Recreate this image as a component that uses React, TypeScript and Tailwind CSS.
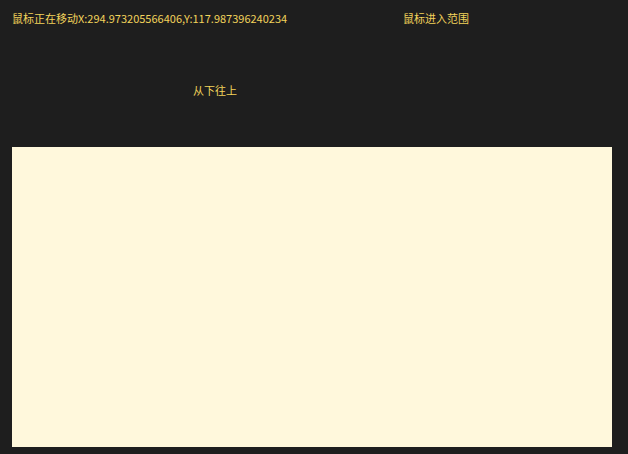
import React from "react";

export default function App() {
  return (
    <div
      className="min-h-screen w-full bg-[#1e1e1e] px-3 pt-[10px] text-[11px] text-[#f2d35b]"
      style={{ fontFamily: '"Noto Sans CJK SC", "Noto Sans", sans-serif' }}
    >
      <div className="flex h-4 items-center leading-4">
        <span className="w-[391px] shrink-0">鼠标正在移动X:294.973205566406,Y:117.987396240234</span>
        <span>鼠标进入范围</span>
      </div>
      <div className="mt-[56px] h-4 pl-[181px] leading-4">从下往上</div>
      <div className="mt-[49px] h-[300px] w-[600px] bg-[#fff8dc]" />
    </div>
  );
}
